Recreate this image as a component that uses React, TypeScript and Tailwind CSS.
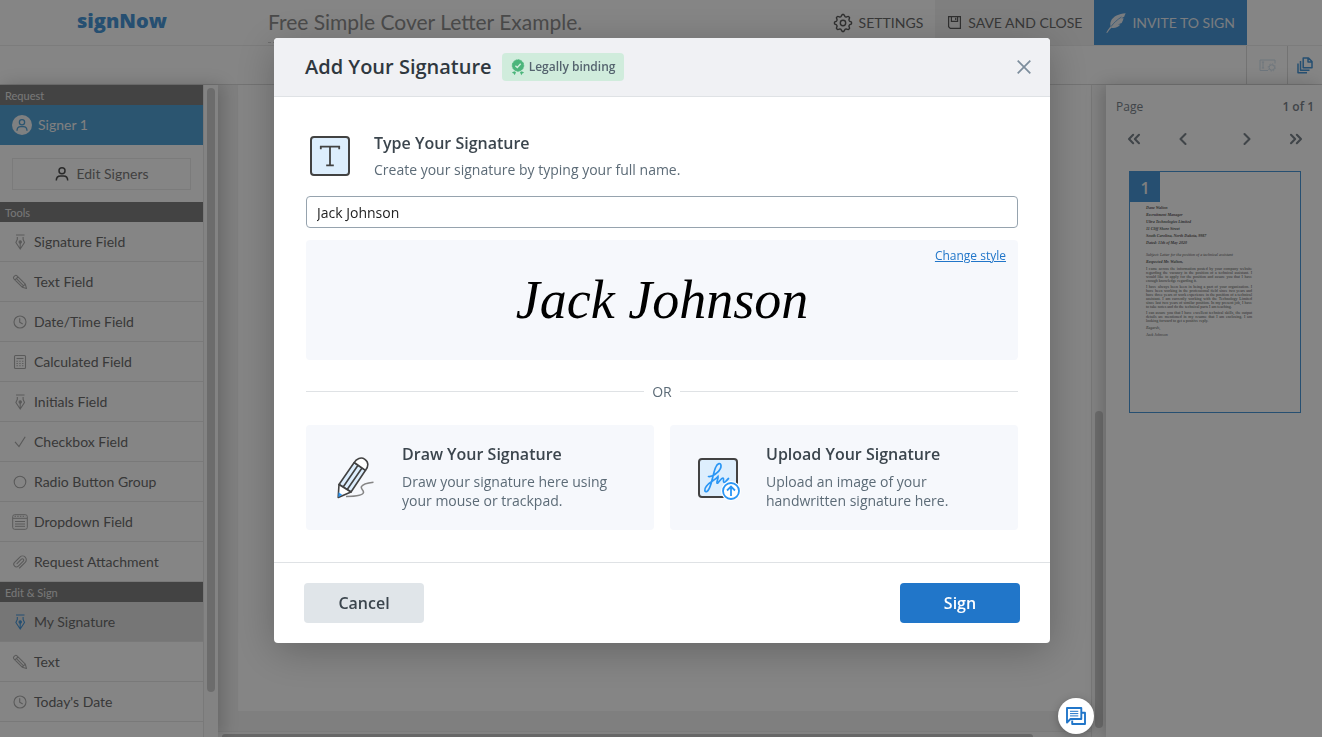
import React, { useState } from "react";
import { ChevronLeft, ChevronRight, ChevronsLeft, ChevronsRight } from "lucide-react";

type IconProps = { className?: string };

function PenNib({ className }: IconProps) {
  return (
    <svg viewBox="0 0 16 16" className={className} fill="none" stroke="currentColor" strokeWidth="1.1">
      <path d="M4 1h8.500M5.300 3v2.500L3.900 8.500 8.200 15l4.300-6.500L11.100 5.500V3M8.200 9v5" />
      <circle cx="8.200" cy="8" r="1.200" fill="currentColor" />
    </svg>
  );
}

function Pencil({ className }: IconProps) {
  return (
    <svg viewBox="0 0 16 16" className={className} fill="none" stroke="currentColor" strokeWidth="1.1" strokeLinejoin="round">
      <path d="M14.500 14.500l-4.300-1.300L1.900 4.900a1.600 1.600 0 0 1 0-2.200l.9-.9a1.600 1.600 0 0 1 2.200 0l8.300 8.300 1.200 4.400zM3 6l3-3M5 5.200l6.600 6.600M10.200 13.200l3-3" />
    </svg>
  );
}

function Clock({ className }: IconProps) {
  return (
    <svg viewBox="0 0 16 16" className={className} fill="none" stroke="currentColor" strokeWidth="1.100">
      <circle cx="8" cy="8" r="6" />
      <path d="M7.700 4.300V8.300l3 1.700" />
    </svg>
  );
}

function Calculator({ className }: IconProps) {
  return (
    <svg viewBox="0 0 16 16" className={className} fill="none" stroke="currentColor" strokeWidth="1.100">
      <rect x="2.500" y="1.500" width="11" height="13" rx="1" />
      <path d="M4.500 4.500h7" />
      <path d="M4.500 7.200h7M4.500 9.500h7M4.500 11.800h7" strokeDasharray="1.300 1.500" />
    </svg>
  );
}

function Check({ className }: IconProps) {
  return (
    <svg viewBox="0 0 16 16" className={className} fill="none" stroke="currentColor" strokeWidth="1.200">
      <path d="M3 7.800l4 4.800 6.200-9.800" />
    </svg>
  );
}

function Radio({ className }: IconProps) {
  return (
    <svg viewBox="0 0 16 16" className={className} fill="none" stroke="currentColor" strokeWidth="1.100">
      <circle cx="8" cy="8" r="5.800" />
    </svg>
  );
}

function Dropdown({ className }: IconProps) {
  return (
    <svg viewBox="0 0 16 16" className={className} fill="none" stroke="currentColor" strokeWidth="1">
      <rect x=".7" y=".7" width="14.600" height="14.600" rx="2" />
      <path d="M1 4.300h14M3 7.500h10M3 10h10M3 12.300h10" />
      <path d="M2.500 2.300h11" strokeDasharray="1.500 1.200" />
    </svg>
  );
}

function Clip({ className }: IconProps) {
  return (
    <svg viewBox="0 0 16 16" className={className} fill="none" stroke="currentColor" strokeWidth="1.100" strokeLinecap="round">
      <path d="M5 9.600l4.400-4.400a1.300 1.300 0 0 1 1.900 1.900l-5 5a2.600 2.600 0 0 1-3.700-3.700l5.300-5.300a3.700 3.700 0 0 1 5.300 5.300l-5.700 5.600" />
    </svg>
  );
}

function Person({ className }: IconProps) {
  return (
    <svg viewBox="0 0 16 16" className={className} fill="none" stroke="currentColor" strokeWidth="1.500">
      <circle cx="8" cy="4.800" r="3" />
      <path d="M2.300 14.500c0-3 1.700-4.600 4.200-4.600h3c2.500 0 4.200 1.600 4.200 4.600" />
    </svg>
  );
}

function Gear({ className }: IconProps) {
  const teeth = Array.from({ length: 64 }, (_, i) => {
    const a = (i / 64) * Math.PI * 2;
    const r = 7.6 + 1 * Math.tanh(2 * Math.cos(a * 8));
    return `${(10 + r * Math.cos(a)).toFixed(2)},${(10 + r * Math.sin(a)).toFixed(2)}`;
  }).join(" ");
  return (
    <svg viewBox="0 0 20 20" className={className} fill="none" stroke="currentColor" strokeWidth="1.400" strokeLinejoin="round">
      <polygon points={teeth} />
      <circle cx="10" cy="10" r="2.700" />
    </svg>
  );
}

function Floppy({ className }: IconProps) {
  return (
    <svg viewBox="0 0 16 16" className={className} fill="none" stroke="currentColor" strokeWidth="1.300">
      <path d="M1.700 1.700h12.600v12.600H3.500l-1.800-1.800z" />
      <path d="M4.700 2v4.800h6.600V2M9.300 3v2.300" />
    </svg>
  );
}

function Feather({ className }: IconProps) {
  return (
    <svg viewBox="0 0 20 20" className={className} fill="currentColor">
      <path d="M19.700.3C13 .6 7 3.500 5 8c-1 2.200-.7 4-.4 5.300C2.900 15.300 1.300 17.500.2 19.700l1.200.1c1.200-2 2.600-3.600 4-5 3.400.6 7-.4 9-3.200l-2.600-.2 3.900-1.500c1-1.700 1.500-3.300 1.900-4.700l-2.300.1 2.900-1.600c.4-1.200.8-2.400 1.500-3.400z" />
      <path d="M5 13.600C8 9.500 11.500 6.500 15.500 4" stroke="#4998d9" strokeWidth=".7" fill="none" />
    </svg>
  );
}

function Copies({ className }: IconProps) {
  return (
    <svg viewBox="0 0 16 17" className={className} fill="none" stroke="currentColor" strokeWidth="1.500" strokeLinejoin="round">
      <path d="M6.200 1h5.300L15 4.500v6.300H6.200zM11 1.300V5h3.700" />
      <path d="M3.500 4v9.300h9M1 6.500v9.200h9" />
    </svg>
  );
}

function FieldSettings({ className }: IconProps) {
  return (
    <svg viewBox="0 0 17 13" className={className} fill="none" stroke="currentColor" strokeWidth="1">
      <path d="M9 11.500H1V1h15v3.500M4 3v6M2.800 3h2.400M2.800 9h2.400" />
      <circle cx="12.800" cy="8.500" r="2.700" />
      <circle cx="12.800" cy="8.500" r="3.600" strokeDasharray="1.300 1.500" />
    </svg>
  );
}

function Badge({ className }: IconProps) {
  return (
    <svg viewBox="0 0 14 17" className={className}>
      <circle cx="7" cy="6.500" r="5.700" fill="#4bb57b" stroke="#4bb57b" strokeWidth="1" strokeDasharray="2 .6" />
      <path d="M4.400 6.700l1.900 1.800 3.400-3.700" fill="none" stroke="#d0ecdc" strokeWidth="1.400" />
      <path d="M.8 13.800l2.400-1.600 1.800 1-1.300 3-1-1.700zM13.200 13.800l-2.400-1.600-1.800 1 1.300 3 1-1.700z" fill="#4bb57b" />
    </svg>
  );
}

function TypeGlyph() {
  return (
    <svg viewBox="0 0 40 40" className="size-10" fill="none" stroke="#424242" strokeWidth="1.800">
      <rect x="1" y="1" width="38" height="38" rx="3" fill="#ddeefd" strokeWidth="2" />
      <path d="M10.800 13.200v-2.500h18.400v2.500M20 10.800v18.600M16.200 29.400h7.600" />
    </svg>
  );
}

function DrawGlyph() {
  return (
    <svg viewBox="0 0 40 44" className="h-11 w-10 shrink-0" fill="none" stroke="#424242" strokeWidth="1.600" strokeLinejoin="round">
      <path d="M3 28.500L18.200 6.500l11.300 7.800L15 36z" fill="#ddeefd" />
      <path d="M18.200 6.500c2-4 7-5.800 10.700-3.200 4 2.800 3.600 7.500.6 11z" fill="#fff" />
      <path d="M3 28.500l-.8 13L15 36z" fill="#fff" />
      <path d="M7 31.200L22 9.200M11 33.700L26 12" />
      <path d="M2.300 41.200l.3-5 3.500 2.600z" fill="#2a96f5" stroke="none" />
      <path d="M10 40.500c6 0 17-.8 17.500-4 .4-3-3.400-3.500-2-6 1.500-3 8-3.800 12-4.300" stroke="#858585" />
    </svg>
  );
}

function UploadGlyph() {
  return (
    <svg viewBox="0 0 43 40" className="h-10 w-[43px] shrink-0 overflow-visible" fill="none">
      <rect x="1" y="1" width="38" height="38" rx="3" fill="#ddeefd" stroke="#424242" strokeWidth="2" />
      <path
        d="M10.500 18.500c5 .8 13-6.500 12.500-11-.3-3-3.500-2.500-5.200 1.500C14.500 16 13.500 31 9 33.500c-2.500 1-3-2-.8-5C11 24 17 22.500 20 18.500c.5 2-1.500 5-1 6.500.8 1.500 4-5.200 6-5 1.400.6-.4 4 1 4.500 1 .3 3-2.800 4.500-4"
        stroke="#2a96f5"
        strokeWidth="1.700"
        strokeLinecap="round"
      />
      <circle cx="33" cy="33" r="10" fill="#fff" />
      <circle cx="33" cy="33" r="8" stroke="#2a96f5" strokeWidth="1.800" />
      <path d="M33 38v-9M29 32.500l4-4 4 4" stroke="#2a96f5" strokeWidth="1.800" />
    </svg>
  );
}

function ChatGlyph() {
  return (
    <svg viewBox="0 0 20 18" className="h-[18px] w-5" fill="none" stroke="#2176c9" strokeWidth="1.900" strokeLinejoin="round">
      <path d="M15.500 5.800H19v11.200H6.200v-3.500" />
      <path d="M1 15.500V1h14.300v11H4.500z" fill="#fff" />
      <path d="M4 4.300h8.300M4 6.600h8.300M4 8.900h8.300" strokeWidth="1" />
    </svg>
  );
}

const tools = [
  { label: "Signature Field", Icon: PenNib },
  { label: "Text Field", Icon: Pencil },
  { label: "Date/Time Field", Icon: Clock },
  { label: "Calculated Field", Icon: Calculator },
  { label: "Initials Field", Icon: PenNib },
  { label: "Checkbox Field", Icon: Check },
  { label: "Radio Button Group", Icon: Radio },
  { label: "Dropdown Field", Icon: Dropdown },
  { label: "Request Attachment", Icon: Clip },
];

const editTools = [
  { label: "My Signature", Icon: PenNib, active: true },
  { label: "Text", Icon: Pencil },
  { label: "Today's Date", Icon: Clock },
];

function SectionTitle({ children }: { children: React.ReactNode }) {
  return <h2 className="flex h-5 shrink-0 items-center bg-[#818181] px-[5px] pt-0.5 text-[11px] text-[#e6e6e6]">{children}</h2>;
}

function ToolRow({ label, Icon, active }: { label: string; Icon: (p: IconProps) => React.ReactElement; active?: boolean }) {
  return (
    <button
      type="button"
      className={
        "flex h-10 w-full shrink-0 items-center gap-1.5 border-b border-[#e8e8e8] pl-3 text-left text-sm text-[#6c6c6c] " +
        (active ? "bg-[#e3e3e3]" : "")
      }
    >
      <Icon className={"size-4 shrink-0 " + (active ? "text-[#4998d9]" : "text-[#adadad]")} />
      {label}
    </button>
  );
}

function Sidebar() {
  return (
    <aside className="z-10 flex w-[218px] shrink-0 overflow-hidden shadow-[4px_0_16px_rgba(0,0,0,0.2)]">
      <div className="flex min-w-0 flex-1 flex-col overflow-hidden border-r border-[#e8e8e8] bg-white">
        <SectionTitle>Request</SectionTitle>
        <button type="button" className="flex h-10 shrink-0 items-center gap-1.5 bg-[#53a3d7] pl-3 text-sm text-[#f5f5f5]">
          <span className="flex size-5 items-center justify-center rounded-full bg-[#f2f5f8] text-[#53a3d7]">
            <Person className="size-3.5" />
          </span>
          Signer 1
        </button>
        <div className="shrink-0 px-3 pt-[13px] pb-3">
          <button type="button" className="flex h-8 w-full items-center justify-center gap-1.5 border border-[#ebebeb] text-sm text-[#7c7c7c]">
            <Person className="size-4 text-[#505050]" />
            Edit Signers
          </button>
        </div>
        <SectionTitle>Tools</SectionTitle>
        {tools.map((t) => (
          <ToolRow key={t.label} {...t} />
        ))}
        <SectionTitle>Edit &amp; Sign</SectionTitle>
        {editTools.map((t) => (
          <ToolRow key={t.label} {...t} />
        ))}
      </div>
      <div className="flex w-3.5 shrink-0 justify-center bg-[#fcfcfc] pt-[3px] pb-[45px]">
        <div className="w-2 flex-1 max-w-2 rounded-full bg-[#d0d0d0]" />
      </div>
    </aside>
  );
}

function TopBar() {
  return (
    <header className="shrink-0">
      <div className="flex h-[46px] border-b border-[#ededed] bg-white pr-[75px]">
        <a href="#" className="flex w-[268px] shrink-0 items-center pb-1 pl-[77px] font-['Open_Sans'] text-xl font-extrabold text-[#4998d9]">
          signNow
        </a>
        <h1 className="flex h-[43px] min-w-0 flex-1 items-center text-[21px] text-[#909090]">
          <span className="border-b border-dashed border-[#d0d0d0] leading-[41px] whitespace-nowrap">Free Simple Cover Letter Example.</span>
        </h1>
        <button type="button" className="flex items-center gap-1.5 px-3 text-sm text-[#6c6c6c]">
          <Gear className="size-5 text-[#5c5c5c]" />
          SETTINGS
        </button>
        <button type="button" className="flex items-center gap-1.5 bg-[#f4f4f4] px-3 text-sm text-[#6c6c6c]">
          <Floppy className="size-[15px] text-[#5c5c5c]" />
          SAVE AND CLOSE
        </button>
        <button type="button" className="flex items-center gap-1.5 bg-[#4998d9] px-3 text-sm text-[#e8eef4]">
          <Feather className="size-5" />
          INVITE TO SIGN
        </button>
      </div>
      <div className="flex h-[39px] justify-end border-b border-[#dcdcdc] bg-white">
        <button type="button" aria-label="Field settings" className="flex w-[41px] items-center justify-center border-l border-[#dcdcdc] text-[#d3e2ee]">
          <FieldSettings className="h-[13px] w-[17px]" />
        </button>
        <button type="button" aria-label="Pages" className="flex w-[35px] items-center justify-center border-l border-[#dcdcdc] text-[#4998d9]">
          <Copies className="h-[17px] w-4" />
        </button>
      </div>
    </header>
  );
}

const pageHead = ["Dane Walton", "Recruitment Manager", "Ultra Technologies Limited", "11 Cliff Shore Street", "South Carolina, North Dakota, 9987", "Dated: 11th of May 2020"];

function Thumbnail() {
  return (
    <div className="mt-[22px] mr-[21px] ml-[23px] h-[242px] border border-[#4998d9]">
      <span className="flex h-[30px] w-[30px] items-center justify-center bg-[#4998d9] pt-0.5 font-['Open_Sans'] text-base font-semibold text-[#f4f4f4]">1</span>
      <div className="px-4 pt-1 pr-12 font-['Liberation_Serif'] text-[4px] leading-[4px] text-[#606060]">
        <div className="space-y-[3px] font-bold italic">
          {pageHead.map((l) => (
            <p key={l}>{l}</p>
          ))}
        </div>
        <p className="mt-2 whitespace-nowrap italic">Subject: Letter for the position of a technical assistant</p>
        <p className="mt-[3px] font-bold italic">Respected Mr. Walton,</p>
        <p className="mt-[3px] text-justify">
          I came across the information posted by your company website regarding the vacancy in the position of a technical assistant. I would like to apply for the
          position and assure you that I have enough knowledge regarding it.
        </p>
        <p className="mt-0.5 text-justify">
          I have always been keen in being a part of your organization. I have been working in the professional field since two years and have three years of work
          experience in the position of a technical assistant. I am currently working with the Technology Limited since last two years of similar position. In my
          present job, I have to take notes and do the technical parts I am teaching.
        </p>
        <p className="mt-0.5 text-justify">
          I can assure you that I have excellent technical skills, the output details are mentioned in my resume that I am enclosing. I am looking forward to get a positive reply.
        </p>
        <p className="mt-[3px] italic">Regards,</p>
        <p className="mt-[3px] italic">Jack Johnson</p>
      </div>
    </div>
  );
}

function PagePanel() {
  return (
    <aside className="z-10 flex w-[216px] shrink-0 flex-col bg-white font-['Open_Sans'] text-[#7b848c] shadow-[-4px_0_16px_rgba(0,0,0,0.2)]">
      <div className="flex items-center justify-between pt-[13px] pr-2 pl-2.5 text-xs leading-[18px]">
        <span>Page</span>
        <span className="font-semibold">1 of 1</span>
      </div>
      <div className="mt-[13px] flex items-center justify-between pr-4 pl-[18px]">
        <button type="button" aria-label="First page"><ChevronsLeft className="size-5" strokeWidth={2.5} /></button>
        <button type="button" aria-label="Previous page" className="mr-6 ml-2.5"><ChevronLeft className="size-5" strokeWidth={2.5} /></button>
        <button type="button" aria-label="Next page" className="mr-2.5"><ChevronRight className="size-5" strokeWidth={2.5} /></button>
        <button type="button" aria-label="Last page"><ChevronsRight className="size-5" strokeWidth={2.5} /></button>
      </div>
      <Thumbnail />
    </aside>
  );
}

function Choice({ title, children, icon }: { title: string; children: React.ReactNode; icon: React.ReactNode }) {
  return (
    <button type="button" className="flex h-[105px] flex-1 items-center rounded bg-[#f6f8fc] text-left">
      <span className="flex w-24 shrink-0 items-center justify-center pl-[3px]">{icon}</span>
      <span className="flex flex-col gap-1.5 pb-1">
        <span className="text-base leading-6 font-semibold text-[#3b454d]">{title}</span>
        <span className="max-w-[216px] text-sm leading-[19px] text-[#5c6b77]">{children}</span>
      </span>
    </button>
  );
}

function SignatureDialog() {
  const [name, setName] = useState("Jack Johnson");
  return (
    <div
      role="dialog"
      aria-labelledby="dialog-title"
      className="flex w-full max-w-[776px] flex-col self-start overflow-hidden rounded bg-white font-['Open_Sans'] shadow-[0_8px_40px_rgba(0,0,0,0.25)]"
    >
      <div className="flex h-[59px] items-center gap-2.5 border-b border-[#dfe2e5] bg-[#f0f1f4] pr-4 pl-[31px]">
        <h2 id="dialog-title" className="text-xl font-semibold text-[#2f383f]">Add Your Signature</h2>
        <span className="flex h-7 items-center gap-1 rounded bg-[#d0ecdc] px-[9px] text-xs font-semibold text-[#55646f]">
          <Badge className="h-[17px] w-3.5" />
          Legally binding
        </span>
        <button type="button" aria-label="Close" className="ml-auto flex size-5 items-center justify-center text-[#7c8d9c]">
          <svg viewBox="0 0 14 14" className="size-3.5" fill="none" stroke="currentColor" strokeWidth="1.700">
            <path d="M.7.7l12.600 12.600M13.300.7L.7 13.300" />
          </svg>
        </button>
      </div>
      <div className="p-8">
        <div className="flex items-start pl-1">
          <div className="pt-[7px]"><TypeGlyph /></div>
          <div className="ml-6">
            <label htmlFor="signer-name" className="block pt-0.5 text-base leading-6 font-semibold text-[#3b454d]">Type Your Signature</label>
            <p className="pt-[5px] text-sm leading-5 text-[#5c6b77]">Create your signature by typing your full name.</p>
          </div>
        </div>
        <input
          id="signer-name"
          value={name}
          onChange={(e) => setName(e.target.value)}
          className="mt-4 block h-8 w-full rounded border border-[#96a3ae] bg-white px-2.5 text-sm text-[#222222] outline-none"
        />
        <div className="relative mt-3 flex h-[120px] items-center justify-center overflow-hidden rounded bg-[#f6f8fc]">
          <span className="font-['Liberation_Serif'] text-[54px] leading-none text-black italic">{name}</span>
          <a href="#" className="absolute top-1.5 right-3 text-xs leading-5 text-[#2176c9] underline">Change style</a>
        </div>
        <div className="mt-5 mb-[22px] flex items-center gap-2 text-sm leading-[23px] text-[#5c6b77]">
          <span className="h-px flex-1 bg-[#dfe2e5]" />
          OR
          <span className="h-px flex-1 bg-[#dfe2e5]" />
        </div>
        <div className="flex gap-4">
          <Choice title="Draw Your Signature" icon={<DrawGlyph />}>Draw your signature here using your mouse or trackpad.</Choice>
          <Choice title="Upload Your Signature" icon={<UploadGlyph />}>Upload an image of your handwritten signature here.</Choice>
        </div>
      </div>
      <div className="flex h-[81px] items-center justify-between border-t border-[#dfe2e5] px-[30px] text-base font-semibold">
        <button type="button" className="h-10 w-[120px] rounded-sm bg-[#e0e5e9] text-[#3b454d]">Cancel</button>
        <button type="button" className="h-10 w-[120px] rounded-sm bg-[#2176c9] text-white">Sign</button>
      </div>
    </div>
  );
}

export default function App() {
  return (
    <div className="flex h-screen flex-col overflow-hidden bg-white font-['Lato',sans-serif]">
      <TopBar />
      <div className="flex min-h-0 flex-1">
        <Sidebar />
        <main className="flex min-w-0 flex-1 bg-[#f3f3f3]">
          <div className="flex min-w-0 flex-1 flex-col border-r border-[#e6e6e6]">
            <div className="ml-5 flex-1 bg-white" />
            <div className="h-5 shrink-0" />
            <div className="flex h-1.5 shrink-0 items-end border-t border-[#ebebeb] bg-[#fafafa] pr-[58px] pl-1">
              <div className="h-[3px] flex-1 rounded-t bg-[#c6c6c6]" />
            </div>
          </div>
          <div className="flex w-3.5 shrink-0 flex-col items-center justify-end bg-[#fafafa] pb-[9px]">
            <div className="h-[317px] w-2 rounded-full bg-[#d0d0d0]" />
          </div>
        </main>
        <PagePanel />
      </div>
      <div className="fixed inset-0 z-20 flex items-start justify-center bg-black/48 pt-[38px] pr-3.5 pl-4">
        <SignatureDialog />
      </div>
      <button
        type="button"
        aria-label="Open chat"
        className="fixed right-[228px] bottom-[3px] z-30 flex size-9 items-center justify-center rounded-full bg-white shadow-[0_2px_8px_rgba(0,0,0,0.25)]"
      >
        <ChatGlyph />
      </button>
    </div>
  );
}
